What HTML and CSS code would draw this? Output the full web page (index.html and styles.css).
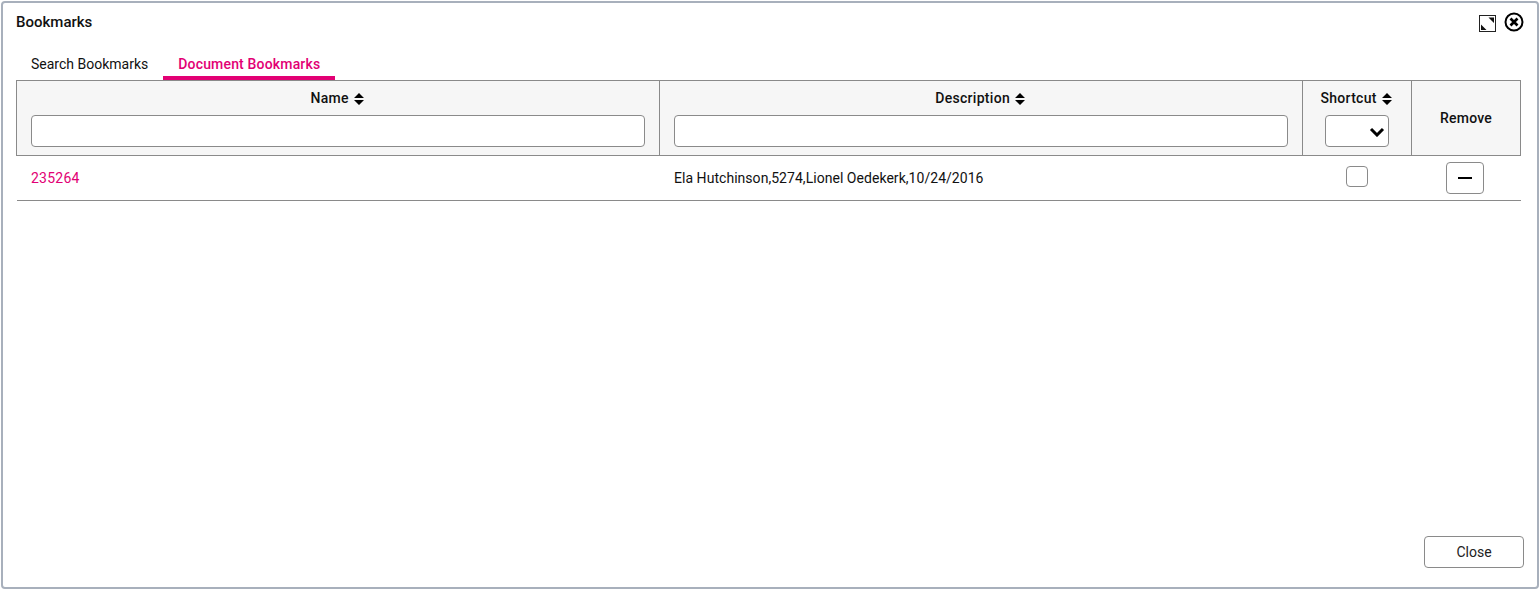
FILE: index.html
```html
<!DOCTYPE html>
<html lang="en">
<head>
<meta charset="utf-8">
<title>Bookmarks</title>
<link rel="stylesheet" href="styles.css">
</head>
<body>
<div class="dialog">
  <header class="titlebar">
    <h1 class="title">Bookmarks</h1>
    <div class="window-actions">
      <svg class="icon-expand" width="18" height="18" viewBox="0 0 18 18"><rect x="0.5" y="0.5" width="16" height="16" fill="#fff" stroke="#222"/><path d="M15 2.5V8L9.5 2.5Z M2 15V9.5L7.5 15Z" fill="#111"/></svg>
      <svg class="icon-close" width="20" height="20" viewBox="0 0 20 20"><circle cx="10" cy="10" r="8.5" fill="#fff" stroke="#000" stroke-width="2"/><path d="M6.5 6.5L13.5 13.5M13.5 6.5L6.5 13.5" stroke="#000" stroke-width="2.7"/></svg>
    </div>
  </header>
  <nav class="tabs">
    <a class="tab">Search Bookmarks</a>
    <a class="tab tab-active">Document Bookmarks</a>
  </nav>
  <div class="grid">
    <div class="head head-name">
      <div class="head-label">Name <svg class="sort" width="10" height="14" viewBox="0 0 10 14"><path d="M5 1L10 6H0ZM5 13L0 8H10Z" fill="#000"/></svg></div>
      <input class="filter" type="text">
    </div>
    <div class="head head-desc">
      <div class="head-label">Description <svg class="sort" width="10" height="14" viewBox="0 0 10 14"><path d="M5 1L10 6H0ZM5 13L0 8H10Z" fill="#000"/></svg></div>
      <input class="filter" type="text">
    </div>
    <div class="head head-short">
      <div class="head-label">Shortcut <svg class="sort" width="10" height="14" viewBox="0 0 10 14"><path d="M5 1L10 6H0ZM5 13L0 8H10Z" fill="#000"/></svg></div>
      <div class="select"><svg width="16" height="10" viewBox="0 0 16 10"><path d="M2 2L8 8L14 2" fill="none" stroke="#000" stroke-width="3"/></svg></div>
    </div>
    <div class="head head-remove">Remove</div>
    <div class="cell cell-name">235264</div>
    <div class="cell cell-desc">Ela Hutchinson,5274,Lionel Oedekerk,10/24/2016</div>
    <div class="cell cell-center"><span class="checkbox"></span></div>
    <div class="cell cell-center"><button class="minus-btn"><span class="minus"></span></button></div>
  </div>
  <footer class="footer"><button class="close-btn">Close</button></footer>
</div>
</body>
</html>
```
FILE: styles.css
```css
* { box-sizing: border-box; }
html, body { margin: 0; height: 100%; background: #fff; }
body { padding: 1px 1px 0; font-family: Roboto, "Liberation Sans", sans-serif; font-size: 14px; color: #111; }
.dialog { height: 588px; border: 2px solid #a8b0bc; border-radius: 4px; padding: 0 13px; display: flex; flex-direction: column; background: #fff; }
.titlebar { height: 43px; display: flex; align-items: flex-start; justify-content: space-between; flex: none; }
.title { margin: 10px 0 0; font-size: 15px; line-height: 19px; font-weight: 500; }
.window-actions { display: flex; align-items: flex-start; gap: 7px; margin: 9px 0 0 0; }
.icon-expand { margin-top: 3px; }
.tabs { display: flex; height: 34px; flex: none; }
.tab { height: 34px; padding: 9px 15px 0; line-height: 19px; }
.tab-active { color: #e20074; font-weight: 500; letter-spacing: 0.17px; border-bottom: 4px solid #e20074; }
.grid { display: grid; grid-template-columns: 644px 643px 109px 109px; width: 1505px; flex: none; }
.head { background: #f6f6f6; height: 76px; border-top: 1px solid #8a8a8a; border-bottom: 1px solid #8a8a8a; border-right: 1px solid #8a8a8a; padding: 8px 14px 0; font-weight: 500; letter-spacing: 0.2px; }
.head-name { border-left: 1px solid #8a8a8a; }
.head-label { text-align: center; line-height: 19px; height: 26px; white-space: nowrap; letter-spacing: 0.3px; }
.sort { vertical-align: -3px; margin-left: 1px; margin-right: 2px; }
.filter { display: block; width: 100%; height: 32px; border: 1px solid #8a8a8a; border-radius: 4px; background: #fff; padding: 0; }
.head-short { padding: 8px 0 0; }
.select { width: 64px; height: 32px; margin-left: 22px; border: 1px solid #8a8a8a; border-radius: 4px; background: #fff; display: flex; align-items: center; justify-content: flex-end; padding: 2px 3px 0 0; }
.head-remove { display: flex; align-items: center; justify-content: center; padding: 0; }
.cell { height: 45px; border-bottom: 1px solid #8a8a8a; display: flex; align-items: center; }
.cell-name { color: #e20074; margin-left: 1px; padding-left: 14px; letter-spacing: 0.25px; }
.cell-desc { padding-left: 14px; letter-spacing: 0.04px; }
.cell-center { justify-content: center; }
.checkbox { width: 22px; height: 21px; border: 1px solid #8a8a8a; border-radius: 4px; background: #fff; display: block; margin-bottom: 4px; margin-right: 1px; }
.minus-btn { width: 38px; height: 32px; border: 1px solid #8a8a8a; border-radius: 4px; background: #fff; padding: 0; display: flex; align-items: center; justify-content: center; margin-right: 3px; margin-bottom: 1px; }
.minus { width: 14px; height: 2px; background: #000; display: block; }
.footer { margin-top: auto; display: flex; justify-content: flex-end; padding-bottom: 19px; }
.close-btn { width: 100px; height: 32px; border: 1px solid #8a8a8a; border-radius: 4px; background: #fff; font: inherit; color: #222; padding: 0; }
```
